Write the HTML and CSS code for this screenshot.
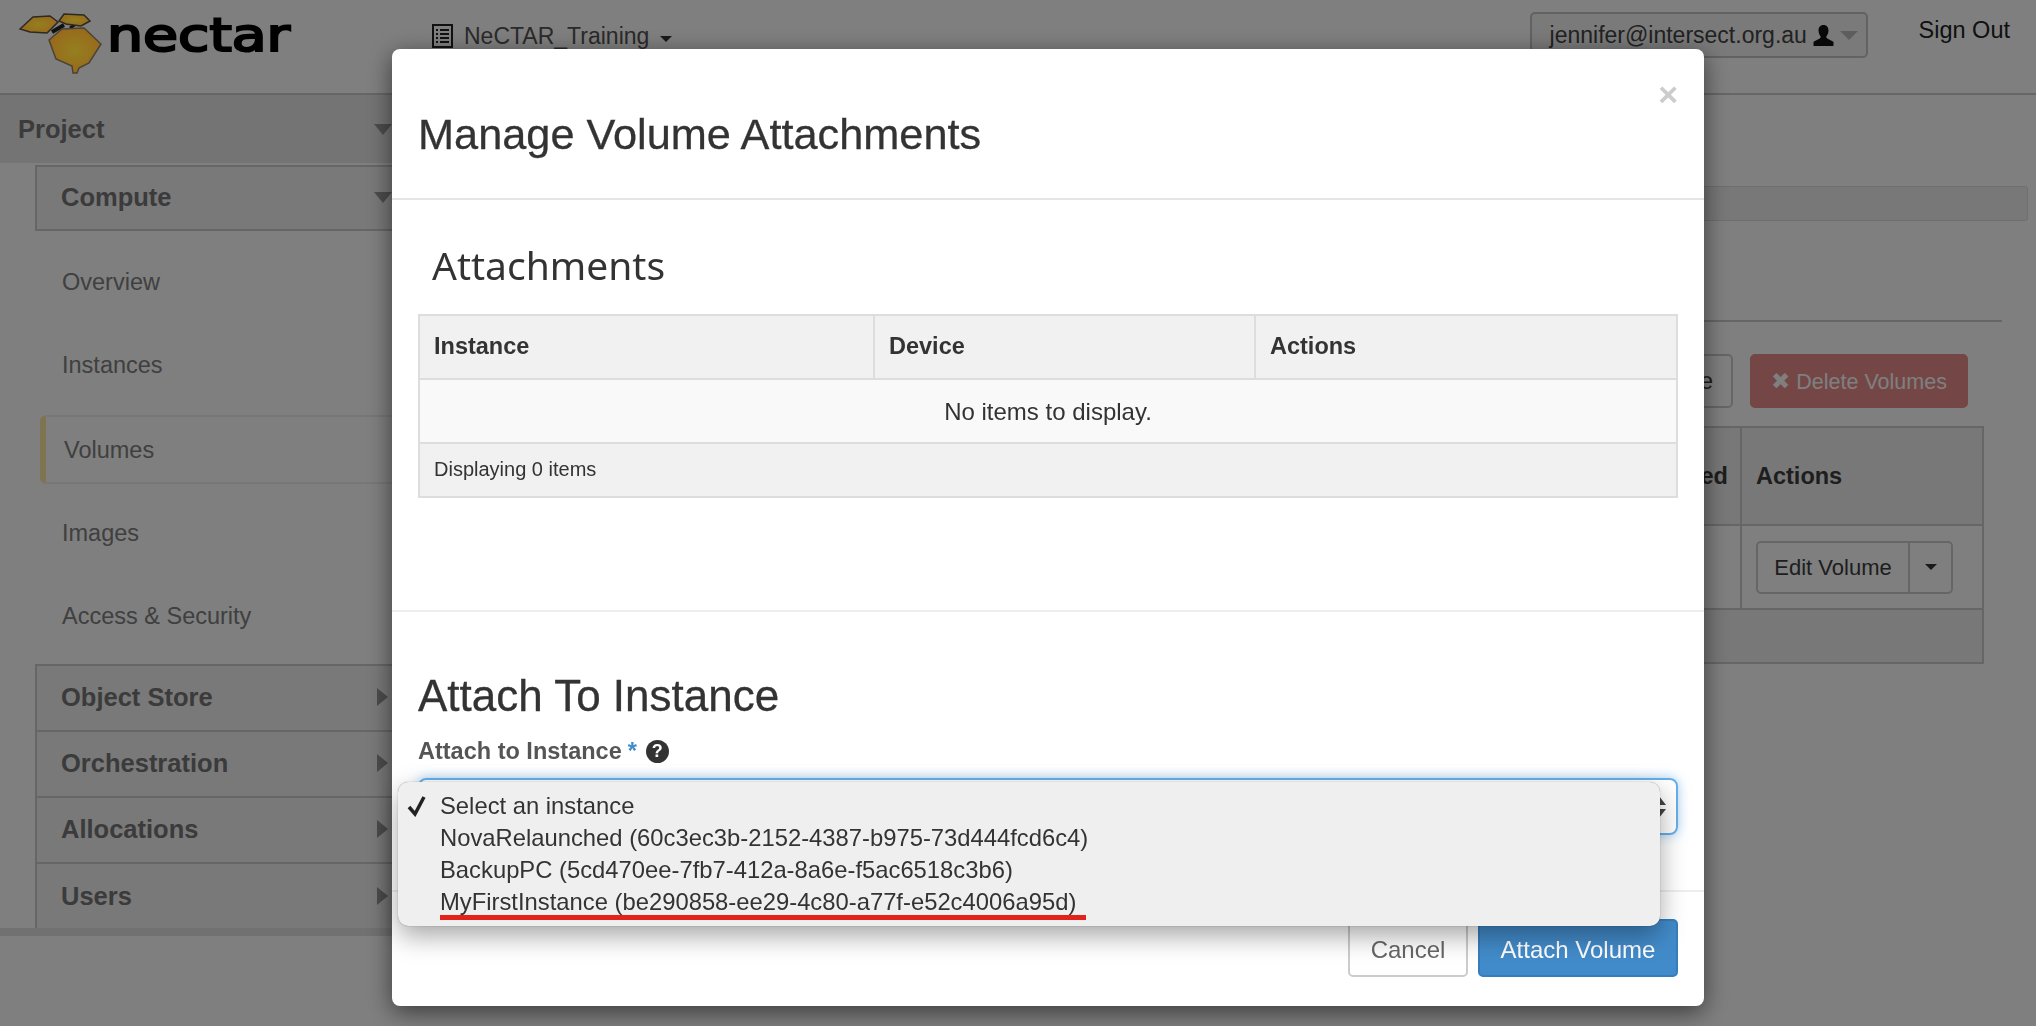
FILE: index.html
```html
<!DOCTYPE html>
<html lang="en">
<head>
  <meta charset="UTF-8" />
  <title>Volumes</title>
  <link rel="stylesheet" href="styles.css">
</head>
<body>

  <header class="topbar">
    <svg class="logo" width="300" height="90" viewBox="0 0 300 90">
      <defs>
        <radialGradient id="honey" cx="50%" cy="50%" r="60%">
          <stop offset="0" stop-color="#94801f"/>
          <stop offset="1" stop-color="#99651c"/>
        </radialGradient>
      </defs>
      <path d="M52 32 L64 25" stroke="#111" stroke-width="4"/>
      <path d="M70 28 L76 24" stroke="#111" stroke-width="3"/>
      <path d="M20 29 L33 17 L50 16 L58 22 L47 33 L30 32 Z" fill="url(#honey)" stroke="#2c2a24" stroke-width="1.500"/>
      <path d="M59 21 L64 14 L84 15 L90 21 L81 26 L66 24 Z" fill="url(#honey)" stroke="#2c2a24" stroke-width="1.500"/>
      <path d="M49 40 L62 29 L84 28 L101 44 L89 63 L79 68 L77 73 L73 73 L72 66 L56 59 Z" fill="url(#honey)" stroke="#4a4436" stroke-width="1.500"/>
      <text class="logo-text" x="107" y="51" textLength="183" lengthAdjust="spacingAndGlyphs">nectar</text>
    </svg>
    <div class="project-picker">
      <svg width="21" height="24" viewBox="0 0 21 24">
        <rect x="1" y="1" width="19" height="22" fill="none" stroke="#222" stroke-width="2"/>
        <path d="M4 6h2M8 6h9M4 10h2M8 10h9M4 14h2M8 14h9M4 18h2M8 18h9" stroke="#222" stroke-width="2"/>
      </svg>
      <span>NeCTAR_Training</span>
      <i class="caret"></i>
    </div>
    <div class="user-menu">
      <span>jennifer@intersect.org.au</span>
      <svg width="23" height="21" viewBox="0 0 23 21">
        <path d="M11.500 0C8 0 6.500 2.500 6.500 5.500C6.500 8.500 8 10.500 8.800 11.800C8.500 14 5 14.500 1.500 17V21H21.500V17C18 14.500 14.500 14 14.200 11.800C15 10.500 16.500 8.500 16.500 5.500C16.500 2.500 15 0 11.500 0Z" fill="#111"/>
      </svg>
      <i class="caret caret-big"></i>
    </div>
    <a class="sign-out">Sign Out</a>
  </header>

  <div class="page">
    <aside class="sidebar">
      <div class="dash-title">Project<i class="arrow-down"></i></div>
      <div class="panel-title panel-open">Compute<i class="arrow-down"></i></div>
      <nav class="nav-links">
        <a>Overview</a>
        <a>Instances</a>
        <a class="active">Volumes</a>
        <a>Images</a>
        <a>Access &amp; Security</a>
      </nav>
      <div class="panel-list">
        <div class="panel-title">Object Store<i class="arrow-right"></i></div>
        <div class="panel-title">Orchestration<i class="arrow-right"></i></div>
        <div class="panel-title">Allocations<i class="arrow-right"></i></div>
        <div class="panel-title">Users<i class="arrow-right"></i></div>
      </div>
    </aside>

    <main class="content">
      <div class="breadcrumb"></div>
      <div class="page-rule"></div>
      <div class="table-actions">
        <button class="btn">Create Volume</button>
        <button class="btn btn-danger"><span class="btn-x">✖</span> Delete Volumes</button>
      </div>
      <table class="volume-table">
        <thead>
          <tr><th class="col-spacer"></th><th class="col-enc">Encrypted</th><th class="col-actions">Actions</th></tr>
        </thead>
        <tbody>
          <tr>
            <td></td><td></td>
            <td><div class="btn-group"><span class="edit">Edit Volume</span><span class="toggle"><i class="caret"></i></span></div></td>
          </tr>
        </tbody>
        <tfoot>
          <tr><td colspan="3"></td></tr>
        </tfoot>
      </table>
    </main>
  </div>

  <div class="backdrop"></div>

  <div class="modal">
    <div class="modal-header">
      <span class="close">×</span>
      <h3>Manage Volume Attachments</h3>
    </div>
    <div class="modal-body">
      <h4>Attachments</h4>
      <table class="attach-table">
        <thead>
          <tr><th class="col-instance">Instance</th><th class="col-device">Device</th><th>Actions</th></tr>
        </thead>
        <tbody>
          <tr><td colspan="3" class="empty">No items to display.</td></tr>
        </tbody>
        <tfoot>
          <tr><td colspan="3">Displaying 0 items</td></tr>
        </tfoot>
      </table>
    </div>
    <div class="modal-form">
      <h2>Attach To Instance</h2>
      <label>Attach to Instance <span class="req">*</span> <span class="help">?</span></label>
      <div class="select-wrap">
        <div class="select">
          <svg width="16" height="22" viewBox="0 0 16 22">
            <path d="M8 0L15 9H1ZM8 22L1 13H15Z" fill="#444"/>
          </svg>
        </div>
        <ul class="select-menu">
          <li>
            <svg class="tick" width="20" height="22" viewBox="0 0 20 22">
              <path d="M2 12L8 19L17 2" fill="none" stroke="#222" stroke-width="3.500"/>
            </svg>
            Select an instance
          </li>
          <li>NovaRelaunched (60c3ec3b-2152-4387-b975-73d444fcd6c4)</li>
          <li>BackupPC (5cd470ee-7fb7-412a-8a6e-f5ac6518c3b6)</li>
          <li class="marked">MyFirstInstance (be290858-ee29-4c80-a77f-e52c4006a95d)</li>
        </ul>
      </div>
    </div>
    <div class="modal-footer">
      <button class="btn-cancel">Cancel</button>
      <button class="btn-primary">Attach Volume</button>
    </div>
  </div>

</body>
</html>
```

FILE: styles.css
```css
/* Global */
* {
  box-sizing: border-box;
}
html, body {
  height: 100%;
}
body {
  margin: 0;
  font-family: "Liberation Sans", Arial, sans-serif;
  font-size: 23.5px;
  color: #333;
  background-color: #fff;
  overflow: hidden;
}

/* Top bar */
.topbar {
  display: flex;
  align-items: flex-start;
  height: 95px;
  border-bottom: 2px solid #ccc;
  color: #555;
}
.logo {
  position: relative; /* sits above the backdrop, keeps its own colours */
  z-index: 1;
  flex: none;
  display: block;
}
.logo-text {
  font-family: "DejaVu Sans", sans-serif;
  font-size: 46px;
  fill: #000;
  stroke: #000;
  stroke-width: 2.2px;
}
.project-picker {
  display: flex;
  align-items: center;
  gap: 11px;
  margin: 24px 0 0 132px;
  height: 24px;
}
.project-picker span {
  font-size: 23px;
  line-height: 34px;
}
.caret {
  display: inline-block;
  border-top: 6px solid #333;
  border-left: 6px solid transparent;
  border-right: 6px solid transparent;
}
.project-picker .caret {
  margin-top: 6px;
}
.caret-big {
  border-top: 9px solid #bbb;
  border-left: 9px solid transparent;
  border-right: 9px solid transparent;
}
.user-menu {
  display: flex;
  align-items: center;
  gap: 5px;
  margin: 12px 0 0 auto;
  width: 338px;
  height: 46px;
  padding: 1px 0 0 18px;
  border: 2px solid #c4c4c4;
  border-radius: 5px;
  background-color: #f4f4f4;
  font-size: 23px;
  color: #444;
}
.sign-out {
  margin: 12px 26px 0 51px;
  line-height: 36px;
  color: #222;
}

/* Page */
.page {
  display: flex;
}
.sidebar {
  flex: none;
  width: 400px;
  height: 841px;
  border-bottom: 8px solid #e2e2e2;
  display: flex;
  flex-direction: column;
  overflow: hidden;
  color: #777;
}
.dash-title {
  flex: none;
  display: flex;
  justify-content: space-between;
  align-items: center;
  height: 68px;
  padding: 0 8px 0 18px;
  background-color: #e8e8e8;
  font-weight: bold;
  font-size: 25.5px;
}
.panel-title {
  flex: none;
  display: flex;
  justify-content: space-between;
  align-items: center;
  height: 66px;
  padding: 0 8px 2px 24px;
  font-weight: bold;
  font-size: 25.5px;
  background-color: #f2f2f2;
  border-bottom: 2px solid #ccc;
}
.panel-open {
  margin: 2px 0 0 35px;
  border: 2px solid #ccc;
  border-right: 0;
}
.arrow-down {
  border-top: 11px solid #999;
  border-left: 9px solid transparent;
  border-right: 9px solid transparent;
}
.arrow-right {
  margin-right: 4px;
  border-left: 11px solid #999;
  border-top: 9px solid transparent;
  border-bottom: 9px solid transparent;
}
.nav-links {
  flex: none;
  display: flex;
  flex-direction: column;
  margin: 10px 0 6px 0;
  color: #808080;
}
.nav-links a {
  height: 83px;
  line-height: 83px;
  padding-left: 62px;
}
.nav-links a.active {
  height: 69px;
  line-height: 66px;
  margin: 8px 0 8px 40px;
  padding-left: 18px;
  border: 2px solid #eee;
  border-left: 6px solid #ffe9a0;
  border-radius: 6px 0 0 6px;
}
.panel-list {
  flex: 1;
  margin-left: 35px;
  border-top: 2px solid #ccc;
  border-left: 2px solid #ccc;
}
.panel-list .panel-title {
  padding-left: 24px;
}
.panel-list .panel-title:last-child {
  border-bottom: 0;
}

/* Main area */
.content {
  flex: 1;
  padding-top: 91px;
  color: #3c3c3c;
}
.breadcrumb {
  height: 35px;
  margin-right: 8px;
  background-color: #f0f0f0;
  border: 1px solid #ddd;
  border-radius: 3px;
}
.page-rule {
  margin: 99px 34px 0 0;
  border-top: 2px solid #ccc;
}
.table-actions {
  display: flex;
  justify-content: flex-end;
  gap: 17px;
  margin: 32px 68px 18px 0;
}
.btn {
  height: 54px;
  padding: 0 18px;
  font: inherit;
  background-color: #fff;
  border: 2px solid #ccc;
  border-radius: 5px;
  color: #3c3c3c;
}
.btn-danger {
  width: 218px;
  padding: 0 16px;
  background-color: #e88c8c;
  border-color: #e88c8c;
  color: #fff;
  font-size: 21.5px;
  white-space: nowrap;
}
.btn-x {
  font-family: "DejaVu Sans", sans-serif;
  font-size: 23px;
}
.volume-table {
  width: 591px;
  margin: 0 52px 0 auto;
  border-collapse: collapse;
  table-layout: fixed;
  border: 2px solid #ccc;
  background-color: #f1f1f1;
}
.volume-table th {
  height: 98px;
  text-align: left;
  padding: 0 14px;
  border: 2px solid #ccc;
  vertical-align: middle;
}
.volume-table th.col-enc {
  width: 133px;
  padding-left: 4px;
}
.col-actions {
  width: 242px;
}
.volume-table td {
  height: 84px;
  border: 2px solid #ccc;
  background-color: #fff;
  padding: 0 14px;
}
.volume-table tfoot td {
  height: 54px;
  background-color: #f1f1f1;
}
.btn-group {
  display: flex;
  width: 197px;
  height: 53px;
  border: 2px solid #ccc;
  border-radius: 5px;
  background-color: #fff;
  font-size: 22px;
  line-height: 49px;
}
.btn-group .edit {
  flex: 1;
  text-align: center;
  border-right: 2px solid #ccc;
}
.btn-group .toggle {
  width: 41px;
  display: flex;
  align-items: center;
  justify-content: center;
}

/* Modal */
.backdrop {
  position: fixed;
  inset: 0;
  background-color: rgba(0,0,0,0.5);
}
.modal {
  position: fixed;
  z-index: 2;
  left: 392px;
  top: 49px;
  width: 1312px;
  height: 957px;
  background-color: #fff;
  border-radius: 8px;
  box-shadow: 0 6px 24px rgba(0,0,0,0.55);
  display: flex;
  flex-direction: column;
}
.modal-header {
  height: 151px;
  padding: 26px 26px 0;
  border-bottom: 2px solid #e5e5e5;
}
.close {
  display: block;
  height: 37px;
  text-align: right;
  font-weight: bold;
  font-size: 34px;
  line-height: 38px;
  color: #ccc;
}
.modal-header h3 {
  margin: 0;
  font-size: 43.3px;
  font-weight: normal;
  line-height: 44px;
  -webkit-text-stroke: 0.3px #333;
}
.modal-body {
  height: 412px;
  padding: 40px 26px 0;
  border-bottom: 2px solid #eee;
}
.modal-body h4 {
  margin: 0 0 24px 14px;
  font-family: "Noto Sans", sans-serif;
  font-size: 39px;
  font-weight: normal;
  line-height: 50px;
}
.attach-table {
  width: 100%;
  border-collapse: collapse;
  table-layout: fixed;
  border: 2px solid #ddd;
}
.attach-table th {
  height: 64px;
  text-align: left;
  padding: 0 14px 2px;
  background-color: #f1f1f1;
  border: 2px solid #ddd;
}
.col-instance {
  width: 455px;
}
.col-device {
  width: 381px;
}
.attach-table td.empty {
  height: 64px;
  padding-top: 2px;
  font-size: 24px;
  text-align: center;
  background-color: #f9f9f9;
}
.attach-table tfoot td {
  height: 54px;
  padding: 0 14px 2px;
  font-size: 20px;
  background-color: #f1f1f1;
  border-top: 2px solid #ddd;
}
.modal-form {
  height: 280px;
  padding: 59px 26px 0;
  border-bottom: 2px solid #eee;
}
.modal-form h2 {
  margin: 0 0 16px;
  font-size: 44px;
  font-weight: normal;
  line-height: 50px;
  -webkit-text-stroke: 0.3px #333;
}
.modal-form label {
  display: flex;
  align-items: center;
  gap: 6px;
  height: 28px;
  margin-bottom: 13px;
  font-weight: bold;
  color: #555;
}
.req {
  color: #428bca;
}
.help {
  display: inline-block;
  width: 23px;
  height: 23px;
  margin-left: 3px;
  border-radius: 50%;
  background-color: #333;
  color: #fff;
  font-size: 18px;
  line-height: 23px;
  text-align: center;
}
.select-wrap {
  position: relative;
}
.select {
  display: flex;
  align-items: center;
  justify-content: flex-end;
  height: 57px;
  padding-right: 9px;
  border: 2px solid #66afe9;
  border-radius: 8px;
  box-shadow: 0 0 12px rgba(102,175,233,0.6);
}
/* native select popup */
.select-menu {
  position: absolute;
  left: -20px;
  top: 4px;
  width: 1262px;
  height: 144px;
  margin: 0;
  padding: 8px 0 0 42px;
  list-style: none;
  background-color: #efefef;
  border-radius: 10px;
  box-shadow: 0 0 1px rgba(0,0,0,0.5), 0 10px 26px rgba(0,0,0,0.35);
}
.select-menu li {
  position: relative;
  height: 32px;
  line-height: 32px;
  font-size: 23.8px;
}
.tick {
  position: absolute;
  left: -33px;
  top: 5px;
}
.marked::after {
  content: "";
  position: absolute;
  left: 0;
  top: 29px;
  width: 646px;
  height: 5px;
  background-color: #e2231a;
}
.modal-footer {
  display: flex;
  justify-content: flex-end;
  gap: 10px;
  padding: 27px 26px 0;
}
.btn-cancel, .btn-primary {
  height: 58px;
  padding-top: 4px;
  font: inherit;
  font-size: 24px;
  border-radius: 5px;
}
.btn-cancel {
  width: 120px;
  background-color: #fff;
  border: 2px solid #ccc;
  color: #666;
}
.btn-primary {
  width: 200px;
  background-color: #428bca;
  border: 2px solid #357ebd;
  color: #fff;
}
```
